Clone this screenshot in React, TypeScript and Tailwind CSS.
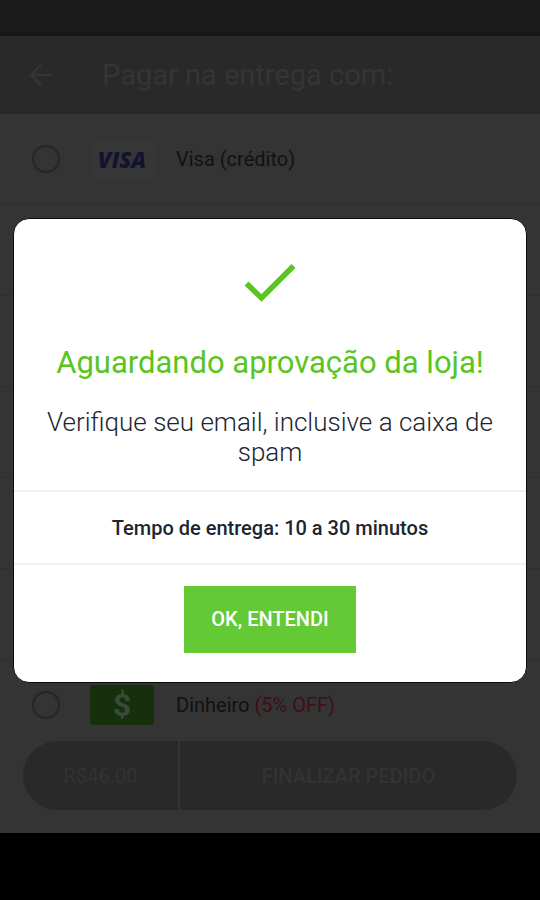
import type { ReactNode } from 'react';

type Method = {
  id: string;
  label: string;
  offer?: string;
  logo: ReactNode;
};

const visaLogo = (
  <span
    aria-hidden="true"
    className="flex h-10 w-16 items-center justify-center rounded bg-[#363636] font-['Open_Sans',sans-serif] text-[22px] font-extrabold italic text-[#12142f]"
  >
    VISA
  </span>
);

const cashLogo = (
  <span
    aria-hidden="true"
    className="flex h-10 w-16 items-center justify-center rounded bg-[#16300d] text-[32px] font-bold text-[#3c4838]"
  >
    $
  </span>
);

const methods: (Method | null)[] = [
  { id: 'visa', label: 'Visa (crédito)', logo: visaLogo },
  null,
  null,
  null,
  null,
  null,
  { id: 'cash', label: 'Dinheiro', offer: '(5% OFF)', logo: cashLogo },
];

function MethodRow({ method }: { method: Method | null }) {
  return (
    <li className="h-[91px] shrink-0 border-b border-[#2f2f2f]">
      {method && (
        <label htmlFor={method.id} className="flex h-full items-center pl-8 text-xl">
          <input
            id={method.id}
            type="radio"
            name="method"
            className="h-7 w-7 shrink-0 appearance-none rounded-full border-2 border-[#262626] checked:bg-[#262626]"
          />
          <span className="ml-[30px]">{method.logo}</span>
          <span className="ml-[22px] text-[#111212]">
            {method.label}
            {method.offer && <span className="text-[#3f0f15]"> {method.offer}</span>}
          </span>
        </label>
      )}
    </li>
  );
}

export default function App() {
  return (
    <div className="flex h-screen flex-col bg-[#343434] font-[Roboto,sans-serif]">
      <div className="h-9 shrink-0 border-b-[3px] border-[#171717] bg-[#1a1a1a]" />

      <header className="flex h-[78px] shrink-0 items-center bg-[#292929] pl-7 text-[#353535]">
        <button type="button" aria-label="Voltar" className="h-6 w-6">
          <svg viewBox="0 0 24 24" className="h-6 w-6" fill="none" stroke="currentColor" strokeWidth="2.5">
            <path d="M24 12H3M13 2L3 12L13 22" />
          </svg>
        </button>
        <h1 className="ml-[50px] text-[29px] leading-8">Pagar na entrega com:</h1>
      </header>

      <main className="flex min-h-0 flex-1 flex-col">
        <ul className="flex min-h-0 flex-1 flex-col overflow-hidden">
          {methods.map((method, index) => (
            <MethodRow key={index} method={method} />
          ))}
        </ul>
        <div className="flex h-[92px] shrink-0 gap-0.5 px-[23px] pb-[23px] text-xl text-[#333333]">
          <button type="button" className="w-[155px] rounded-l-full bg-[#292929]">
            R$46.00
          </button>
          <button type="button" className="flex-1 rounded-r-full bg-[#292929] font-medium">
            FINALIZAR PEDIDO
          </button>
        </div>
      </main>

      <div className="h-[67px] shrink-0 bg-black" />

      <div className="fixed inset-0 flex items-center justify-center px-[13px]">
        <section
          role="dialog"
          aria-modal="true"
          aria-labelledby="dialog-title"
          className="w-full rounded-2xl border border-[#0b0b0b] bg-white text-center text-[#1b262f]"
        >
          <div className="px-7 pt-11 pb-[23px]">
            <svg viewBox="0 0 52 40" className="mx-auto h-10 w-[52px]" fill="none" stroke="#5ac422" strokeWidth="5.5">
              <path d="M2.500 20.500L17.500 35L49.500 3" />
            </svg>
            <h2 id="dialog-title" className="mt-10 text-[31px] leading-10 text-[#5ac422]">
              Aguardando aprovação da loja!
            </h2>
            <p className="mt-6 text-[26px] leading-[30px] font-light">
              Verifique seu email, inclusive a caixa de spam
            </p>
          </div>
          <p className="border-y-2 border-[#f0f0f0] pt-[22px] pb-[21px] text-xl leading-7 font-medium">
            Tempo de entrega: 10 a 30 minutos
          </p>
          <div className="pt-[21px] pb-[29px]">
            <button type="button" className="h-[67px] w-[172px] bg-[#63c935] text-xl font-medium text-white">
              OK, ENTENDI
            </button>
          </div>
        </section>
      </div>
    </div>
  );
}
